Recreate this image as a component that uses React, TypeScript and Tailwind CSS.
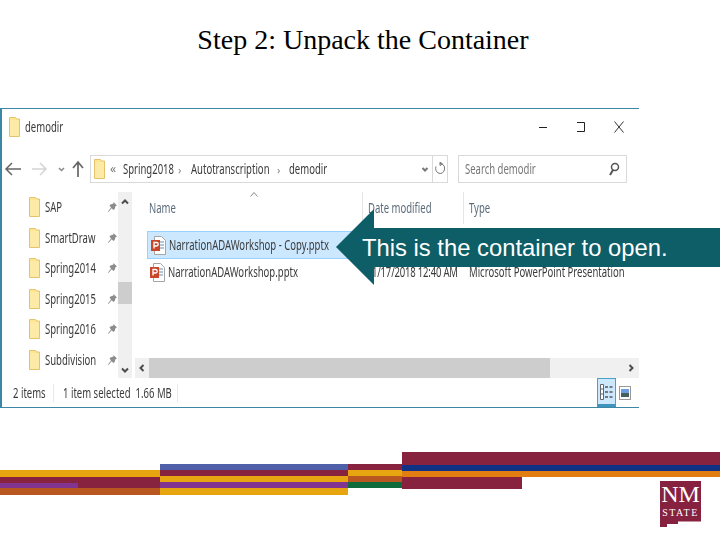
import React from "react";

const Sq = ({ children, s = "" }: { children: React.ReactNode; s?: string }) => (
  <span className={`inline-block origin-left -translate-y-px scale-x-[.635] whitespace-nowrap text-[15px] leading-[16px] [font-family:'Noto_Sans',sans-serif] ${s}`}>
    {children}
  </span>
);

const Folder = ({ h = 20 }: { h?: number }) => (
  <svg width="11" height={h} viewBox="0 0 11 20" preserveAspectRatio="none" className="shrink-0">
    <path d="M.5.5h6l1 1.5h3v17.5H.5z" fill="#fde68f" stroke="#e3c46c" />
    <rect x="1" y="3" width="9" height="16" fill="#fdeaa6" />
  </svg>
);

const Pin = () => (
  <svg width="11" height="12" viewBox="0 0 11 12" className="shrink-0">
    <path d="M6.5 1 10 4.5 8.6 5l-1 3L6.5 9 4.6 7.2 1.5 11 1 10.500 4 6.500 2.500 4.500l1-1 3-1z" fill="#8c8c8c" />
  </svg>
);

const Ppt = () => (
  <svg width="15" height="19" viewBox="0 0 15 19" className="shrink-0">
    <path d="M3.500.5h7l4 4v14h-11z" fill="#fff" stroke="#a5a5a5" />
    <path d="M9 6h4M9 9h4M9 12h4" stroke="#9cb4c8" strokeWidth="1.500" />
    <rect x="0" y="4" width="9" height="11" fill="#c8472b" />
    <path d="M3 12.500v-6h2.500a1.500 1.500 0 0 1 0 3.500H3" fill="none" stroke="#fff" strokeWidth="1.300" />
  </svg>
);

const Chev = ({ d, c = "#4d4d4d" }: { d: string; c?: string }) => (
  <svg width="10" height="10" viewBox="0 0 10 10" className="shrink-0">
    <path d={d} fill="none" stroke={c} strokeWidth="2" />
  </svg>
);

const navItems = ["SAP", "SmartDraw", "Spring2014", "Spring2015", "Spring2016", "Subdivision"];

const Window = () => (
  <div className="flex h-[300px] w-[639px] flex-col border-y border-l-2 border-y-[#3b87a6] border-l-[#3b87a6] bg-white text-[#3a3a3a] blur-[0.35px]">
    {/* Title bar */}
    <div className="flex h-[38px] shrink-0 items-center pb-[2px] pl-[7px]">
      <Folder />
      <div className="ml-[5px] min-w-0 flex-1"><Sq>demodir</Sq></div>
      <svg width="86" height="16" viewBox="0 0 86 16" className="mr-[14px] shrink-0">
        <path d="M0 8.500h8" stroke="#222" />
        <path d="M38 3.500h7.500v9H38" fill="none" stroke="#222" />
        <path d="M75.500 2.500l9 11M84.500 2.500l-9 11" stroke="#333" />
      </svg>
    </div>
    {/* Nav row */}
    <div className="mt-[8px] flex h-[28px] shrink-0 items-center">
      <svg width="88" height="18" viewBox="0 0 88 18" className="shrink-0">
        <path d="M19 9H4M10 3 4 9l6 6" fill="none" stroke="#666" strokeWidth="1.500" />
        <path d="M30 9h13M38 3l6 6-6 6" fill="none" stroke="#d4d4d4" strokeWidth="1.500" />
        <path d="M57 8l2.500 2.500L62 8" fill="none" stroke="#888" strokeWidth="1.500" />
        <path d="M76 17V2M71 8l5-6 5 6" fill="none" stroke="#666" strokeWidth="1.700" />
      </svg>
      <div className="flex h-[28px] w-[358px] shrink-0 items-center border border-[#d9d9d9] pl-[3px]">
        <Folder />
        <div className="ml-[5px] flex min-w-0 flex-1 items-center overflow-hidden">
          <span className="w-[13px] shrink-0 text-[12px] leading-none text-[#777]">«</span>
          <span className="w-[55px] shrink-0"><Sq>Spring2018</Sq></span>
          <span className="w-[13px] shrink-0 text-[11px] leading-none text-[#888]">›</span>
          <span className="w-[86px] shrink-0"><Sq>Autotranscription</Sq></span>
          <span className="w-[12px] shrink-0 text-[11px] leading-none text-[#888]">›</span>
          <span className="shrink-0"><Sq>demodir</Sq></span>
        </div>
        <Chev d="M2.500 4 5 6.500 7.500 4" c="#777" />
        <div className="ml-[2px] flex h-full w-[15px] items-center justify-center border-l border-[#d9d9d9]">
          <svg width="10" height="14" viewBox="0 0 10 14">
            <path d="M5 1.500a4.500 5 0 1 1-4 3M5 0v3.500L7.500 2z" fill="none" stroke="#777" />
          </svg>
        </div>
      </div>
      <div className="ml-[10px] flex h-[28px] w-[169px] shrink-0 items-center border border-[#d9d9d9] pl-[6px] pr-[6px] text-[#777]">
        <div className="min-w-0 flex-1"><Sq>Search demodir</Sq></div>
        <svg width="12" height="14" viewBox="0 0 12 14" className="shrink-0">
          <circle cx="7" cy="5" r="3.500" fill="none" stroke="#555" strokeWidth="1.500" />
          <path d="M5 8l-3 5" stroke="#555" strokeWidth="2" />
        </svg>
      </div>
    </div>
    {/* Panes */}
    <div className="mt-[9px] flex h-[186px] shrink-0">
      <div className="w-[116px] shrink-0 pl-[27px]">
        {navItems.map((n) => (
          <div key={n} className="flex h-[30.5px] items-center">
            <Folder />
            <div className="ml-[5px] min-w-0 flex-1"><Sq>{n}</Sq></div>
            <Pin />
          </div>
        ))}
      </div>
      <div className="flex w-[14px] shrink-0 flex-col bg-[#f0f0f0]">
        <div className="flex h-[20px] items-center justify-center"><Chev d="M2 6.500 5 3.500l3 3" /></div>
        <div className="mt-[70px] h-[22px] bg-[#cdcdcd]" />
        <div className="mt-auto flex h-[16px] items-center justify-center"><Chev d="M2 3.500 5 6.500l3-3" /></div>
      </div>
      <div className="ml-[3px] flex min-w-0 flex-1 flex-col">
        <div className="grid h-[32px] grid-cols-[227px_101px_1fr] text-[#5b6b7b]">
          <div className="relative flex items-center pl-[14px]">
            <Sq>Name</Sq>
            <svg width="8" height="5" viewBox="0 0 8 5" className="absolute left-[115px] top-0">
              <path d="M.5 4.500 4 .5l3.500 4" fill="none" stroke="#888" />
            </svg>
          </div>
          <div className="flex min-w-0 items-center border-l border-[#e5e5e5] pl-[5px]"><Sq>Date modified</Sq></div>
          <div className="flex min-w-0 items-center border-l border-[#e5e5e5] pl-[5px]"><Sq>Type</Sq></div>
        </div>
        <div className="ml-[12px] mt-[7px] flex h-[28px] items-center border border-[#99d1ff] bg-[#cce8ff] pl-[3px]">
          <Ppt />
          <div className="ml-[3px] min-w-0"><Sq>NarrationADAWorkshop - Copy.pptx</Sq></div>
        </div>
        <div className="grid h-[26px] grid-cols-[222px_97px_1fr] items-center pl-[15px]">
          <div className="flex min-w-0 items-center">
            <Ppt />
            <div className="ml-[3px] min-w-0"><Sq>NarrationADAWorkshop.pptx</Sq></div>
          </div>
          <div className="min-w-0"><Sq s="tracking-[-0.3px]">1/17/2018 12:40 AM</Sq></div>
          <div className="min-w-0"><Sq>Microsoft PowerPoint Presentation</Sq></div>
        </div>
        <div className="mt-auto flex h-[20px] items-center bg-[#f0f0f0]">
          <div className="flex w-[14px] justify-center"><Chev d="M6.500 2 3.500 5l3 3" /></div>
          <div className="h-full w-[401px] bg-[#cdcdcd]" />
          <div className="ml-auto mr-[3px] flex w-[10px] justify-center"><Chev d="M3.500 2 6.500 5l-3 3" /></div>
        </div>
      </div>
    </div>
    {/* Status bar */}
    <div className="flex min-h-0 flex-1 items-center pl-[11px]">
      <div className="flex h-[18px] w-[41px] min-w-0 items-center border-r border-[#e8e8e8]"><Sq>2 items</Sq></div>
      <div className="ml-[9px] flex h-[18px] w-[115px] min-w-0 items-center border-r border-[#e8e8e8]">
        <Sq>1 item selected&nbsp;&nbsp;1.66 MB</Sq>
      </div>
      <div className="ml-auto mr-[8px] flex h-full items-stretch">
        <div className="flex w-[19px] items-center justify-center border-x border-t border-b-[3px] border-x-[#4ba0c8] border-t-[#4ba0c8] border-b-[#3e94bf] bg-[#cce8ff]">
          <svg width="13" height="16" viewBox="0 0 13 16">
            <path d="M.5.5h3v15h-3zM1 5h2M1 10h2" fill="#fff" stroke="#666" />
            <path d="M5 3h3M9.500 3h3M5 8h3M9.500 8h3M5 13h3M9.500 13h3" stroke="#555" strokeWidth="1.500" />
          </svg>
        </div>
        <div className="ml-[3px] flex items-center">
          <svg width="12" height="14" viewBox="0 0 12 14">
            <rect x=".5" y=".5" width="11" height="13" fill="#fff" stroke="#999" />
            <rect x="2" y="3" width="8" height="4" fill="#6d9fe0" />
            <rect x="2" y="7" width="8" height="4" fill="#47615a" />
          </svg>
        </div>
      </div>
    </div>
  </div>
);

const Logo = () => (
  <div className="relative mr-[19px] mt-[4px] h-[46px] w-[41px]">
    <svg width="41" height="46" viewBox="0 0 41 46" className="absolute inset-0">
      <path d="M0 0h41v40.500H18v2.500H7v3H0z" fill="#86213f" />
    </svg>
    <div className="relative flex flex-col items-center text-white [font-family:'Liberation_Serif',serif]">
      <span className="mt-[4px] text-[24px] leading-[19px]">NM</span>
      <span className="mt-[4px] text-[10px] leading-[9px] tracking-[1.500px]">STATE</span>
    </div>
  </div>
);

export default function App() {
  return (
    <div className="relative flex h-[540px] w-[720px] flex-col overflow-hidden bg-white">
      <div className="h-[108px] shrink-0 pt-[24px] text-center">
        <div className="pl-[6px] text-[28px] leading-[32px] text-black [font-family:'Liberation_Serif',serif]">
          Step 2: Unpack the Container
        </div>
      </div>
      <Window />
      {/* Arrow callout */}
      <div className="absolute left-[336px] top-[209px] flex h-[76px] w-[384px] items-center">
        <svg width="38" height="76" viewBox="0 0 38 76" className="shrink-0">
          <path d="M38 0v76L0 38z" fill="#0d5e66" />
        </svg>
        <div className="flex h-[39px] flex-1 items-center bg-[#0d5e66] pt-[2px]">
          <span className="-ml-[12px] whitespace-nowrap text-[23.8px] leading-none text-white [font-family:'Liberation_Sans',sans-serif]">
            This is the container to open.
          </span>
        </div>
      </div>
      {/* Footer stripes */}
      <div className="mt-[44px] flex items-start">
        <div className="mt-[18px] w-[160px] shrink-0">
          <div className="h-[7px] bg-[#e7a50f]" />
          <div className="h-[11px] bg-[#88233f] pt-[6px]">
            <div className="h-[5px] w-[78px] bg-[#813591]" />
          </div>
          <div className="h-[7px] bg-[#b8571f]" />
        </div>
        <div className="mt-[12px] w-[188px] shrink-0">
          <div className="h-[6px] bg-[#4f5fa8]" />
          <div className="h-[6px] bg-[#88233f]" />
          <div className="h-[6px] bg-[#e7a50f]" />
          <div className="h-[6px] bg-[#813591]" />
          <div className="h-[7px] bg-[#e7a50f]" />
        </div>
        <div className="mt-[12px] w-[54px] shrink-0">
          <div className="h-[6px] bg-[#88233f]" />
          <div className="h-[6px] bg-[#e7a50f]" />
          <div className="h-[6px] bg-[#b8571f]" />
          <div className="h-[6px] bg-[#0f6b3c]" />
        </div>
        <div className="flex-1">
          <div className="h-[13px] bg-[#88233f]" />
          <div className="h-[6px] bg-[#0f3284]" />
          <div className="h-[6px] bg-[#e27d12]" />
          <div className="flex items-start justify-between">
            <div className="h-[12px] w-[120px] bg-[#88233f]" />
            <Logo />
          </div>
        </div>
      </div>
    </div>
  );
}
